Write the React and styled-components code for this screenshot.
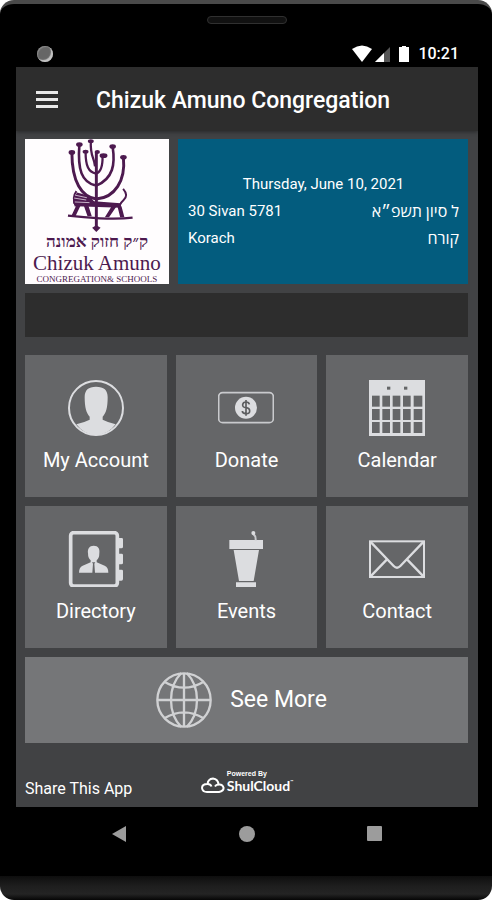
import styled, { createGlobalStyle } from 'styled-components';

const GlobalStyle = createGlobalStyle`
	* {
		box-sizing: border-box;
	}
	body {
		margin: 0;
		background: #fff;
		font-family: Roboto, 'Noto Sans', 'Open Sans', sans-serif;
	}
	button {
		border: 0;
		padding: 0;
		background: none;
		color: inherit;
		font: inherit;
		cursor: pointer;
	}
	a {
		color: inherit;
		text-decoration: none;
	}
	h1,
	p {
		margin: 0;
	}
	svg {
		display: block;
	}
`;

const Phone = styled.div`
	display: flex;
	flex-direction: column;
	min-height: 100vh;
	padding: 0 14px 0 16px;
	border-top: 4px solid #4a4a4a;
	border-radius: 14px;
	background: linear-gradient(to top, #060606 0, #242424 6px, #1e1e1e 14px, #0e0e0e 24px, #000 24px);
	overflow: hidden;
`;

const Speaker = styled.div`
	align-self: center;
	width: 80px;
	height: 8px;
	margin-top: 12px;
	border: 1px solid #303030;
	border-radius: 4px;
	background: #111;
`;

const StatusBar = styled.div`
	display: flex;
	align-items: center;
	justify-content: space-between;
	height: 43px;
	padding: 16px 19px 0 21px;
	color: #fff;
	font-size: 16px;
	font-weight: 500;
`;

const Camera = styled.span`
	width: 16px;
	height: 16px;
	border-radius: 50%;
	background: #666;
	box-shadow: inset -2px -2px 1px #c4c4c4, inset 1px 1px 1px #8a8a8a;
`;

const Signals = styled.div`
	display: flex;
	align-items: center;
	gap: 8px;
`;

const Screen = styled.div`
	display: flex;
	flex: 1;
	flex-direction: column;
	background: #414244;
`;

const Header = styled.header`
	display: flex;
	align-items: center;
	gap: 38px;
	height: 64px;
	padding: 0 20px;
	background: #2d2d2d;
	box-shadow: 0 1px 4px rgba(0, 0, 0, 0.4);
	color: #fff;
`;

const Title = styled.h1`
	padding-top: 3px;
	font-size: 23px;
	font-weight: 500;
	line-height: 28px;
	white-space: nowrap;
`;

const Main = styled.main`
	display: flex;
	flex-direction: column;
	gap: 9px;
	padding: 8px 10px 0 9px;
`;

const Intro = styled.section`
	display: grid;
	grid-template-columns: 144px 1fr;
	gap: 9px;
	height: 145px;
`;

const Logo = styled.div`
	display: flex;
	flex-direction: column;
	align-items: center;
	background: #fffdfe;
	color: #4d1a4f;
	white-space: nowrap;
	overflow: hidden;
`;

const HebrewName = styled.p`
	font-family: 'Liberation Serif', serif;
	font-size: 17px;
	font-weight: 700;
	line-height: 20px;
`;

const LogoName = styled.p`
	font-family: 'Liberation Serif', serif;
	font-size: 21px;
	line-height: 22px;
`;

const LogoCaption = styled.p`
	font-family: 'Liberation Serif', serif;
	font-size: 9px;
	line-height: 10px;
`;

const DateCard = styled.div`
	display: flex;
	flex-direction: column;
	justify-content: center;
	padding: 0 9px 0 10px;
	background: #035c7e;
	color: #fff;
	font-size: 15px;
	line-height: 27px;
`;

const Today = styled.p`
	text-align: center;
`;

const DateRow = styled.p`
	display: flex;
	justify-content: space-between;
`;

const HebrewDate = styled.span`
	font-size: 16px;
`;

const Banner = styled.div`
	height: 44px;
	margin-bottom: 9px;
	background: #2d2d2d;
`;

const Tiles = styled.nav`
	display: grid;
	grid-template-columns: repeat(3, 1fr);
	gap: 9px;
`;

const Tile = styled.a`
	display: flex;
	flex-direction: column;
	align-items: center;
	gap: 11px;
	height: 142px;
	padding-top: 25px;
	background: #656668;
	color: #fff;
	font-size: 20px;
	line-height: 26px;
`;

const MoreButton = styled.button`
	display: flex;
	align-items: center;
	justify-content: center;
	gap: 18px;
	height: 86px;
	padding-right: 10px;
	background: #757678;
	color: #fff;
	font-size: 23px;
	line-height: 28px;
`;

const Footer = styled.footer`
	display: grid;
	grid-template-columns: 1fr auto 1fr;
	align-items: end;
	padding: 27px 9px 7px;
	color: #fff;
	font-size: 16px;
	line-height: 22px;
`;

const ShulCloud = styled.a`
	display: flex;
	align-items: flex-end;
	gap: 2px;
	margin-bottom: 6px;
`;

const Brand = styled.span`
	display: flex;
	flex-direction: column;
	font-family: Lato, sans-serif;
	font-size: 14px;
	font-weight: 700;
	line-height: 16px;
`;

const Powered = styled.small`
	font-family: 'Liberation Sans', sans-serif;
	font-size: 7px;
	font-weight: 700;
	line-height: 8px;
`;

const Trademark = styled.sup`
	font-size: 4px;
	line-height: 4px;
	vertical-align: 8px;
`;

const SystemNav = styled.div`
	display: flex;
	align-items: center;
	justify-content: space-between;
	height: 93px;
	padding: 0 95px 39px;
`;

const StatusIcons = () => (
	<svg width="58" height="18" viewBox="0 0 58 18" aria-hidden="true">
		<path d="M0 4Q10-3 20 4L10 17Z" fill="#fff" />
		<path d="M38 2V17H23Z" fill="#555" />
		<path d="M32 8V17H23Z" fill="#fff" />
		<path d="M50 1h4v1h3v15H47V2h3Z" fill="#fff" />
	</svg>
);

const MenuIcon = () => (
	<svg width="22" height="17" viewBox="0 0 22 17" fill="#e8e8e8" aria-hidden="true">
		<path d="M0 0h22v3H0zM0 7h22v3H0zM0 14h22v3H0z" />
	</svg>
);

const Menorah = () => (
	<svg width="144" height="95" viewBox="15 27 432 285" fill="none" stroke="#4d1a4f" aria-hidden="true">
		<g strokeWidth="9">
			<path d="M229 66V300" />
			<path d="M154 68C154 158 184 205 229 211C286 207 319 154 312 84" />
			<path d="M177 44C171 124 185 158 225 169" strokeWidth="8" />
			<path d="M196 66C196 110 205 129 228 133Q249 127 248 80" strokeWidth="7" />
			<path d="M279 51C287 104 281 148 229 170" strokeWidth="8" />
			<path d="M212 34C210 83 222 80 225 111" strokeWidth="7" />
		</g>
		<g fill="#4d1a4f" stroke="none">
			<ellipse cx="154" cy="68" rx="10" ry="7" />
			<ellipse cx="177" cy="44" rx="10" ry="7" />
			<ellipse cx="212" cy="34" rx="9" ry="6" />
			<ellipse cx="196" cy="66" rx="9" ry="6" />
			<ellipse cx="232" cy="67" rx="8" ry="6" />
			<ellipse cx="251" cy="78" rx="12" ry="7" />
			<ellipse cx="279" cy="50" rx="10" ry="7" />
			<ellipse cx="312" cy="83" rx="10" ry="7" />
			<path d="M158 211L170 191L205 201L222 218L303 224L304 238L166 233L158 224Z" />
			<path d="M168 229L180 232L165 264H152ZM191 232H205L215 264H202ZM276 233L290 235L268 267H255ZM294 235L306 233L315 267H302Z" />
			<path d="M216 299L229 291L242 299L229 312Z" />
		</g>
		<path d="M142 262Q190 267 240 270Q300 273 340 268" strokeWidth="7" />
		<path d="M168 187Q153 207 166 233M311 180Q329 200 312 215Q297 228 302 241" strokeWidth="6" />
		<path d="M164 199L200 207M161 208L198 214M163 220L208 222" stroke="#c9b5ca" strokeWidth="3" />
	</svg>
);

const AccountIcon = () => (
	<svg width="56" height="56" viewBox="0 0 168 168" aria-hidden="true">
		<circle cx="84" cy="84" r="81" fill="none" stroke="#dcdde0" strokeWidth="6" />
		<path
			d="M84 20C108 20 119 30 119 52C119 82 114 100 104 110V119Q120 127 143 133Q119 165 84 165T25 133Q49 127 65 119V110C55 100 50 82 50 52C50 30 61 20 84 20Z"
			fill="#dcdde0"
		/>
	</svg>
);

const DonateIcon = () => (
	<svg width="56" height="56" viewBox="0 0 168 168" aria-hidden="true">
		<rect x="2" y="38" width="164" height="90" rx="12" fill="none" stroke="#c9cacd" strokeWidth="5" />
		<circle cx="84" cy="83" r="33" fill="#dcdde0" />
		<path
			d="M94 73Q93 66 84 66T74 74T84 83T95 93T84 101T73 93M84 60V107"
			fill="none"
			stroke="#5c5d5f"
			strokeWidth="5"
		/>
	</svg>
);

const CalendarIcon = () => (
	<svg width="56" height="56" viewBox="0 0 168 168" aria-hidden="true">
		<path d="M0 0H168V168H0Z" fill="#dcdde0" />
		<g fill="#656668">
			<rect x="54" y="20" width="10" height="9" />
			<rect x="105" y="20" width="10" height="9" />
			{[47, 87, 126].map((y) =>
				[9, 40, 71, 102, 134].map((x) => (
					<rect key={`${x}-${y}`} x={x} y={y} width={x === 134 ? 26 : 23} height="33" />
				))
			)}
		</g>
	</svg>
);

const DirectoryIcon = () => (
	<svg width="56" height="56" viewBox="0 0 168 168" aria-hidden="true">
		<rect x="8" y="5" width="140" height="160" rx="9" fill="none" stroke="#dcdde0" strokeWidth="11" />
		<path
			d="M150 21H161Q165 21 165 25V47Q165 52 160 52H150ZM150 68H161Q165 68 165 72V96Q165 100 160 100H150ZM150 116H161Q165 116 165 120V144Q165 149 160 149H150Z"
			fill="#dcdde0"
		/>
		<path
			d="M77 44C91 44 96 54 94 67Q94 82 86 88V94L110 104Q121 109 121 125H81L79 98L82 94H72L75 98L73 125H33Q33 109 44 104L68 94V88Q60 82 60 67C58 54 64 44 77 44Z"
			fill="#dcdde0"
		/>
	</svg>
);

const EventsIcon = () => (
	<svg width="56" height="56" viewBox="0 0 168 168" aria-hidden="true">
		<path d="M34 27H135V54H34ZM47 57H123L107 150H63ZM54 154H114V168H54Z" fill="#dcdde0" />
		<path d="M113 28Q114 14 104 7" fill="none" stroke="#c9cacd" strokeWidth="6" />
		<circle cx="106" cy="6" r="6" fill="#dcdde0" />
	</svg>
);

const ContactIcon = () => (
	<svg width="56" height="56" viewBox="0 0 168 168" fill="none" stroke="#dcdde0" strokeWidth="6" aria-hidden="true">
		<rect x="3" y="31" width="162" height="107" />
		<path d="M4 32L74 105Q84 115 94 105L164 32M4 137L54 85M164 137L114 85" strokeWidth="7" />
	</svg>
);

const GlobeIcon = () => (
	<svg width="56" height="56" viewBox="0 0 168 168" fill="none" stroke="#d0d1d3" strokeWidth="7" aria-hidden="true">
		<circle cx="84" cy="84" r="80" />
		<path d="M84 3V165M3 84H165M76 3Q45 34 45 84T76 165M92 3Q123 34 123 84T92 165M25 29Q84 65 143 29M25 139Q84 103 143 139" />
	</svg>
);

const CloudIcon = () => (
	<svg width="24" height="17" viewBox="0 0 24 17" fill="none" stroke="#fff" strokeWidth="2" aria-hidden="true">
		<path d="M6 15H18Q23 14 22.500 10.500Q21.500 7 17.500 7.500Q17 2 12 1.500Q7 2 6.500 7Q1 7 1 11Q1.500 15 6 15Z" />
		<path d="M6.500 7Q9.500 7 10.500 9.500M17.500 7.500Q15 7.500 14 9.500" />
	</svg>
);

const tiles = [
	{ label: 'My Account', Icon: AccountIcon },
	{ label: 'Donate', Icon: DonateIcon },
	{ label: 'Calendar', Icon: CalendarIcon },
	{ label: 'Directory', Icon: DirectoryIcon },
	{ label: 'Events', Icon: EventsIcon },
	{ label: 'Contact', Icon: ContactIcon },
];

export default function App() {
	return (
		<Phone>
			<GlobalStyle />
			<Speaker />
			<StatusBar>
				<Camera />
				<Signals>
					<StatusIcons />
					<span>10:21</span>
				</Signals>
			</StatusBar>
			<Screen>
				<Header>
					<button type="button" aria-label="Menu">
						<MenuIcon />
					</button>
					<Title>Chizuk Amuno Congregation</Title>
				</Header>
				<Main>
					<Intro>
						<Logo>
							<Menorah />
							<HebrewName dir="rtl">ק״ק חזוק אמונה</HebrewName>
							<LogoName>Chizuk Amuno</LogoName>
							<LogoCaption>CONGREGATION&amp; SCHOOLS</LogoCaption>
						</Logo>
						<DateCard>
							<Today>Thursday, June 10, 2021</Today>
							<DateRow>
								<span>30 Sivan 5781</span>
								<HebrewDate dir="rtl">ל סיון תשפ״א</HebrewDate>
							</DateRow>
							<DateRow>
								<span>Korach</span>
								<HebrewDate dir="rtl">קורח</HebrewDate>
							</DateRow>
						</DateCard>
					</Intro>
					<Banner />
					<Tiles>
						{tiles.map(({ label, Icon }) => (
							<Tile key={label} href="#">
								<Icon />
								{label}
							</Tile>
						))}
					</Tiles>
					<MoreButton type="button">
						<GlobeIcon />
						See More
					</MoreButton>
				</Main>
				<Footer>
					<a href="#">Share This App</a>
					<ShulCloud href="#">
						<CloudIcon />
						<Brand>
							<Powered>Powered By</Powered>
							<span>
								ShulCloud<Trademark>™</Trademark>
							</span>
						</Brand>
					</ShulCloud>
				</Footer>
			</Screen>
			<SystemNav>
				<button type="button" aria-label="Back">
					<svg width="16" height="16" viewBox="0 0 16 16" fill="#9c9c9c" aria-hidden="true">
						<path d="M15 0V16L1 8Z" />
					</svg>
				</button>
				<button type="button" aria-label="Home">
					<svg width="16" height="16" viewBox="0 0 16 16" fill="#9c9c9c" aria-hidden="true">
						<circle cx="8" cy="8" r="8" />
					</svg>
				</button>
				<button type="button" aria-label="Recent apps">
					<svg width="16" height="16" viewBox="0 0 16 16" fill="#9c9c9c" aria-hidden="true">
						<rect width="15" height="15" rx="1" />
					</svg>
				</button>
			</SystemNav>
		</Phone>
	);
}
